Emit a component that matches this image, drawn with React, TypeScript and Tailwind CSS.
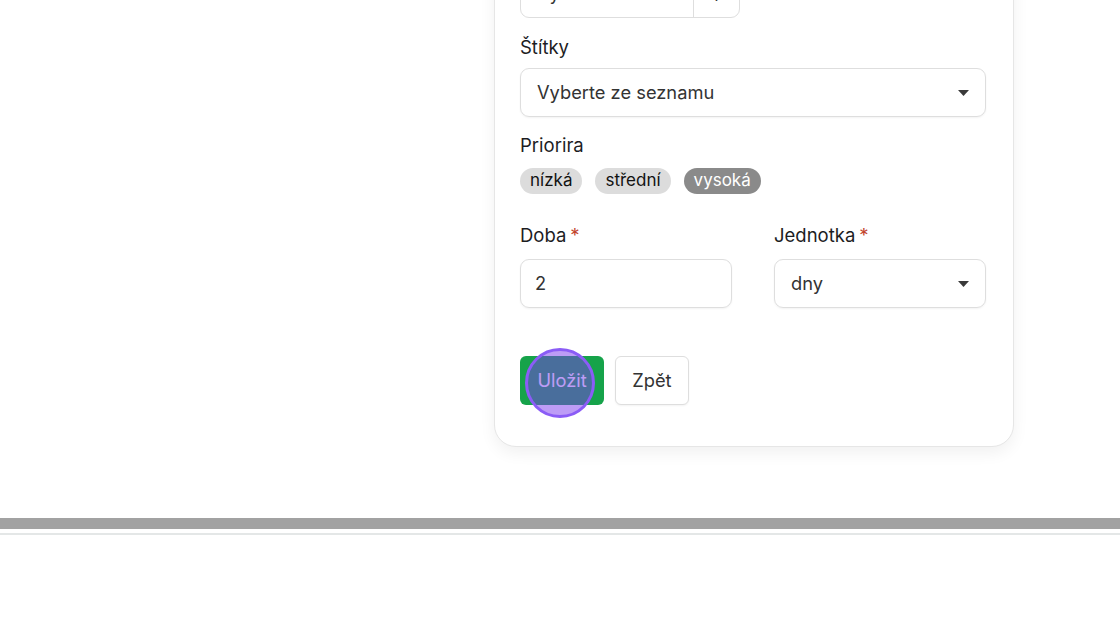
const Caret = () => (
  <svg width="11" height="6" viewBox="0 0 11 6" className="fill-[#3a3a3a]">
    <path d="M0 0h11L5.5 6z" />
  </svg>
);

const Label = ({ text, required }: { text: string; required?: boolean }) => (
  <p className="text-[18.5px] leading-[26px] text-[#1d1d1f]">
    {text}
    {required && <span className="ml-1 text-[#c2452d]">*</span>}
  </p>
);

const priorities = [
  { name: "nízká", active: false },
  { name: "střední", active: false },
  { name: "vysoká", active: true },
];

export default function App() {
  return (
    <div className="flex h-[626px] flex-col overflow-hidden bg-white font-['Inter',sans-serif]">
      <div className="h-[518px] shrink-0 overflow-hidden">
        <div className="ml-[494px] -mt-[58px] w-[520px] rounded-[22px] border border-[#e6e6e6] bg-white pb-[41px] pl-[25px] pr-[27px] pt-[26px] shadow-[0_6px_16px_rgba(0,0,0,0.06)]">
          <div className="flex h-[49px] w-[220px] overflow-hidden rounded-[9px] border border-[#dedede]">
            <div className="flex flex-1 items-end px-4 pb-[14px] text-[18px] leading-none text-[#333]">Vyberte…</div>
            <div className="flex w-[46px] items-end justify-center border-l border-[#dedede] pb-[12px] text-[18px] leading-none text-[#333]">+</div>
          </div>

          <div className="mt-[16px]">
            <Label text="Štítky" />
            <div className="mt-[8px] flex h-[49px] items-center justify-between rounded-[9px] border border-[#dedede] px-4 text-[18.3px] text-[#333] shadow-[0_1px_2px_rgba(0,0,0,0.05)]">
              <span>Vyberte ze seznamu</span>
              <Caret />
            </div>
          </div>

          <div className="mt-[15px]">
            <Label text="Priorira" />
            <div className="mt-[10px] flex gap-[13px]">
              {priorities.map((p) => (
                <span
                  key={p.name}
                  className={`flex h-[26px] items-center rounded-full px-[10px] text-[17px] ${
                    p.active ? "bg-[#8a8a8a] text-white" : "bg-[#dcdcdc] text-[#111]"
                  }`}
                >
                  {p.name}
                </span>
              ))}
            </div>
          </div>

          <div className="mt-[28px] grid grid-cols-2 gap-[42px]">
            <div>
              <Label text="Doba" required />
              <div className="mt-[11px] flex h-[49px] items-center rounded-[9px] border border-[#dedede] px-[14px] text-[18.3px] text-[#333] shadow-[0_1px_2px_rgba(0,0,0,0.05)]">
                2
              </div>
            </div>
            <div>
              <Label text="Jednotka" required />
              <div className="mt-[11px] flex h-[49px] items-center justify-between rounded-[9px] border border-[#dedede] px-4 text-[18.3px] text-[#333] shadow-[0_1px_2px_rgba(0,0,0,0.05)]">
                <span>dny</span>
                <Caret />
              </div>
            </div>
          </div>

          <div className="mt-[48px] flex items-start gap-[11px]">
            <div className="relative flex">
              <button className="h-[49px] rounded-[6px] bg-[#16a34a] px-[17.5px] text-[18.3px] text-white">Uložit</button>
              <span className="pointer-events-none absolute left-[5px] top-[-8px] h-[70px] w-[70px] rounded-full border-[3px] border-[#8b5cf6] bg-[rgba(124,58,237,0.5)]" />
            </div>
            <button className="h-[49px] rounded-[6px] border border-[#dedede] bg-white px-[16px] text-[18.3px] text-[#333] shadow-[0_1px_2px_rgba(0,0,0,0.05)]">
              Zpět
            </button>
          </div>
        </div>
      </div>
      <div className="h-[11px] shrink-0 bg-[#a2a2a2]" />
      <div className="mt-[4px] h-[2px] shrink-0 bg-[#e4e7e7]" />
    </div>
  );
}
